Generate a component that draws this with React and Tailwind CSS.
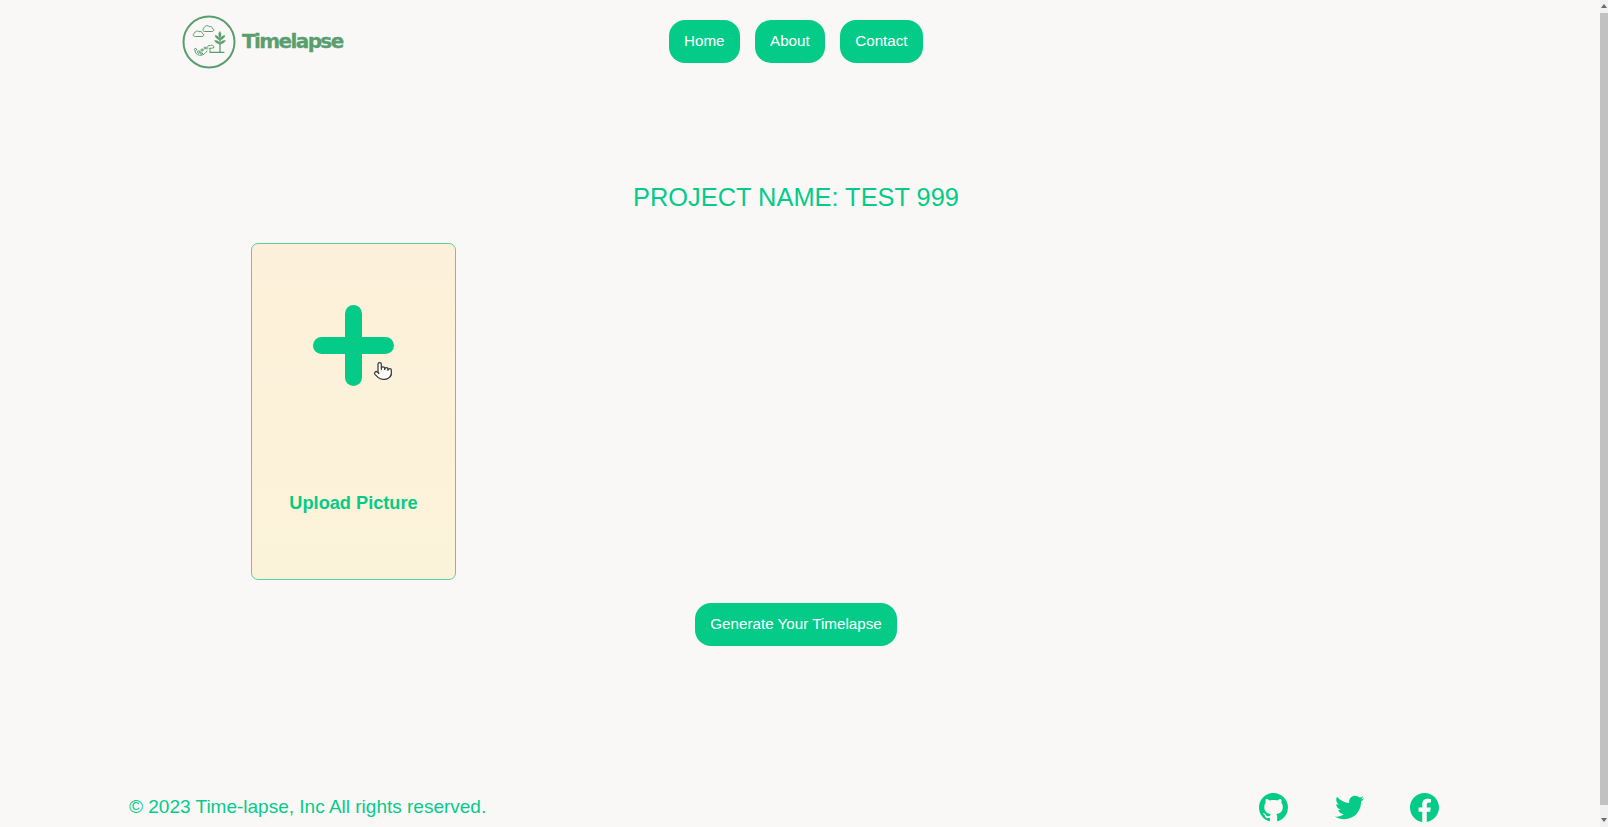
import React from "react";
import { BsGithub, BsFacebook } from "react-icons/bs";
import { FaTwitter } from "react-icons/fa";
import { Pointer } from "lucide-react";

function Logo() {
  return (
    <svg width="54" height="54" viewBox="0 0 54 54" fill="none" stroke="#5a9e6d" strokeLinecap="round" strokeLinejoin="round" className="shrink-0">
      <circle cx="27" cy="27" r="25.500" strokeWidth="2" />
      <g strokeWidth="1" transform="translate(1 1)">
        <path d="M12 20.500c-2 0-2.400-3-.4-3.400.3-2 3-2.800 4.300-1.300 1.500-.9 3.400 0 3.400 1.600 1.900 0 2.100 3.100 0 3.100z" />
        <path d="M21.500 15.500c-2 0-2.300-3-.4-3.400.4-2.400 3.600-3.300 5-1.400 1.600-.8 3.400.2 3.300 1.800 1.900.2 2 3-.1 3z" />
        <path d="M37 36V19" strokeWidth="1.300" />
        <path d="M27 36.300h14" strokeWidth="1.300" />
        <path d="M37 24c-2-.4-4.500-2-5-4.500 2.500.1 4.500 1.300 5 4.500zM37 24c2-.4 4.500-2 5-4.500-2.500.1-4.500 1.300-5 4.500zM37 21c-1.400-1-2-3.500-.2-5.500 1.800 2 1.500 4.500.2 5.500zM37 28c-2 0-4.500-1.200-5.500-3.500 2.800-.3 4.700.8 5.500 3.500zM37 28c2 0 4.500-1.200 5.500-3.500-2.800-.3-4.700.8-5.500 3.500z" fill="#5a9e6d" strokeWidth="0.500" />
        <path d="M24 33c-.5-2.500 1.500-4 3.500-3.500 1.500-.8 3.500 0 3.500 2-1 .8-4 1-5 .8M27 33v3" />
        <path d="M12 35.500c.5 2.800 4 4.300 6.500 3.700 2.500-.6 4.300-2.300 5.500-4.200" />
        <circle cx="12.500" cy="33.500" r="1.100" />
        <circle cx="15.800" cy="36" r="1.300" />
        <circle cx="19" cy="34" r="1.100" />
        <circle cx="22" cy="32" r="1" />
        <circle cx="18.500" cy="37.500" r="0.900" />
      </g>
    </svg>
  );
}

function Btn({ children }) {
  return (
    <button className="h-[43px] px-[15px] pb-[2px] rounded-[16px] bg-[#05cb89] text-white text-[15.200px] leading-none">
      {children}
    </button>
  );
}

export default function App() {
  return (
    <div className="relative h-screen overflow-hidden flex flex-col bg-[#faf8f7] text-[#05cb89] font-['Liberation_Sans',Arial,sans-serif]">
      <header className="flex items-center h-[82px] pl-[182px] pt-[1px]">
        <div className="flex items-center gap-[6px] w-[487px]">
          <Logo />
          <span className="pb-[2px] font-['DejaVu_Sans',sans-serif] font-bold text-[20px] tracking-[-1.600px] text-[#5a9e6d] [-webkit-text-stroke:0.3px_#5a9e6d]">Timelapse</span>
        </div>
        <nav className="flex gap-[15.500px]">
          <Btn>Home</Btn>
          <Btn>About</Btn>
          <Btn>Contact</Btn>
        </nav>
      </header>

      <main className="flex flex-col pr-[16px]">
        <h1 className="mt-[100px] text-center text-[25.400px] leading-[30px] font-normal">PROJECT NAME: TEST 999</h1>
        <div className="mt-[31px] pl-[251px]">
          <div className="relative w-[205px] h-[337px] flex flex-col items-center rounded-[7px] border border-[#5ccf9f] bg-[linear-gradient(180deg,#fdf0da,#fbf3d9)]">
            <div className="relative mt-[61px] w-[81px] h-[81px] shrink-0">
              <div className="absolute left-[32px] top-0 w-[17px] h-[81px] rounded-full bg-[#05cb89]" />
              <div className="absolute left-0 top-[32px] w-[81px] h-[17px] rounded-full bg-[#05cb89]" />
            </div>
            <p className="mt-[106px] text-[18.200px] leading-[22px] font-bold">Upload Picture</p>
            <Pointer size={20} fill="#ffffff" stroke="#3a3a3a" strokeWidth={1.500} className="absolute left-[121px] top-[117px]" />
          </div>
        </div>
        <div className="mt-[23px] flex justify-center">
          <Btn>Generate Your Timelapse</Btn>
        </div>
      </main>

      <footer className="mt-auto h-[40px] flex items-center pl-[129px]">
        <p className="text-[19px] leading-[24px] w-[1130px]">© 2023 Time-lapse, Inc All rights reserved.</p>
        <div className="flex gap-[46.500px] text-[#05cb89]">
          <BsGithub size={29} />
          <FaTwitter size={29} />
          <BsFacebook size={29} />
        </div>
      </footer>

      <div className="absolute right-0 top-0 bottom-0 w-[8px] flex flex-col items-center bg-[#f1f1f1]">
        <svg width="6" height="13" viewBox="0 0 6 13" className="shrink-0"><path d="M3 4 L6 8 L0 8 Z" fill="#6b6b6b" /></svg>
        <div className="w-full h-[792px] bg-[#c1c1c1] shrink-0" />
        <svg width="6" height="22" viewBox="0 0 6 22" className="shrink-0"><path d="M0 13 L6 13 L3 17 Z" fill="#6b6b6b" /></svg>
      </div>
    </div>
  );
}
